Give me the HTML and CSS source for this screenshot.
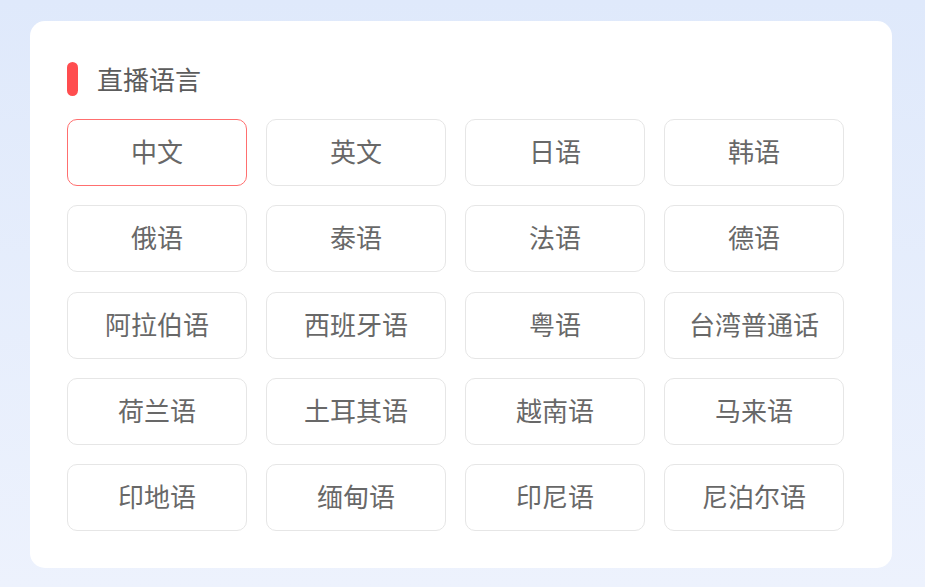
FILE: index.html
```html
<!DOCTYPE html>
<html lang="zh-CN">
<head>
<meta charset="utf-8">
<title>直播语言</title>
<link rel="stylesheet" href="styles.css">
</head>
<body>
<div class="card">
  <div class="title-row">
    <span class="pill"></span>
    <h2 class="title">直播语言</h2>
  </div>
  <div class="grid">
    <button class="opt active">中文</button>
    <button class="opt">英文</button>
    <button class="opt">日语</button>
    <button class="opt">韩语</button>
    <button class="opt">俄语</button>
    <button class="opt">泰语</button>
    <button class="opt">法语</button>
    <button class="opt">德语</button>
    <button class="opt">阿拉伯语</button>
    <button class="opt">西班牙语</button>
    <button class="opt">粤语</button>
    <button class="opt">台湾普通话</button>
    <button class="opt">荷兰语</button>
    <button class="opt">土耳其语</button>
    <button class="opt">越南语</button>
    <button class="opt">马来语</button>
    <button class="opt">印地语</button>
    <button class="opt">缅甸语</button>
    <button class="opt">印尼语</button>
    <button class="opt">尼泊尔语</button>
  </div>
</div>
</body>
</html>
```

FILE: styles.css
```css
html, body {
  margin: 0;
  height: 100%;
}
body {
  background: linear-gradient(180deg, #dfe9fb 0%, #edf2fd 100%);
  padding: 21px 33px 0 30px;
  box-sizing: border-box;
  font-family: "Noto Sans CJK SC", "Noto Sans", sans-serif;
}
.card {
  width: 862px;
  box-sizing: border-box;
  background: #fff;
  border-radius: 15px;
  padding: 41px 48px 37px 37px;
}
.title-row {
  display: flex;
  align-items: center;
  height: 34px;
  gap: 19px;
}
.pill {
  width: 11px;
  height: 34px;
  border-radius: 6px;
  background: #ff4d4f;
}
.title {
  margin: 0;
  font-size: 26px;
  font-weight: 400;
  color: #5c5c5c;
  line-height: 34px;
}
.grid {
  margin-top: 23px;
  display: grid;
  grid-template-columns: repeat(4, 180px);
  grid-auto-rows: 67px;
  column-gap: 19px;
  row-gap: 19.25px;
}
.opt {
  font-family: inherit;
  font-size: 26px;
  line-height: 1;
  color: #686868;
  background: #fff;
  border: 1px solid #e6e6e6;
  border-radius: 10px;
  padding: 0 0 3px;
  cursor: pointer;
}
.opt.active {
  border-color: #ff6f6f;
}
```
